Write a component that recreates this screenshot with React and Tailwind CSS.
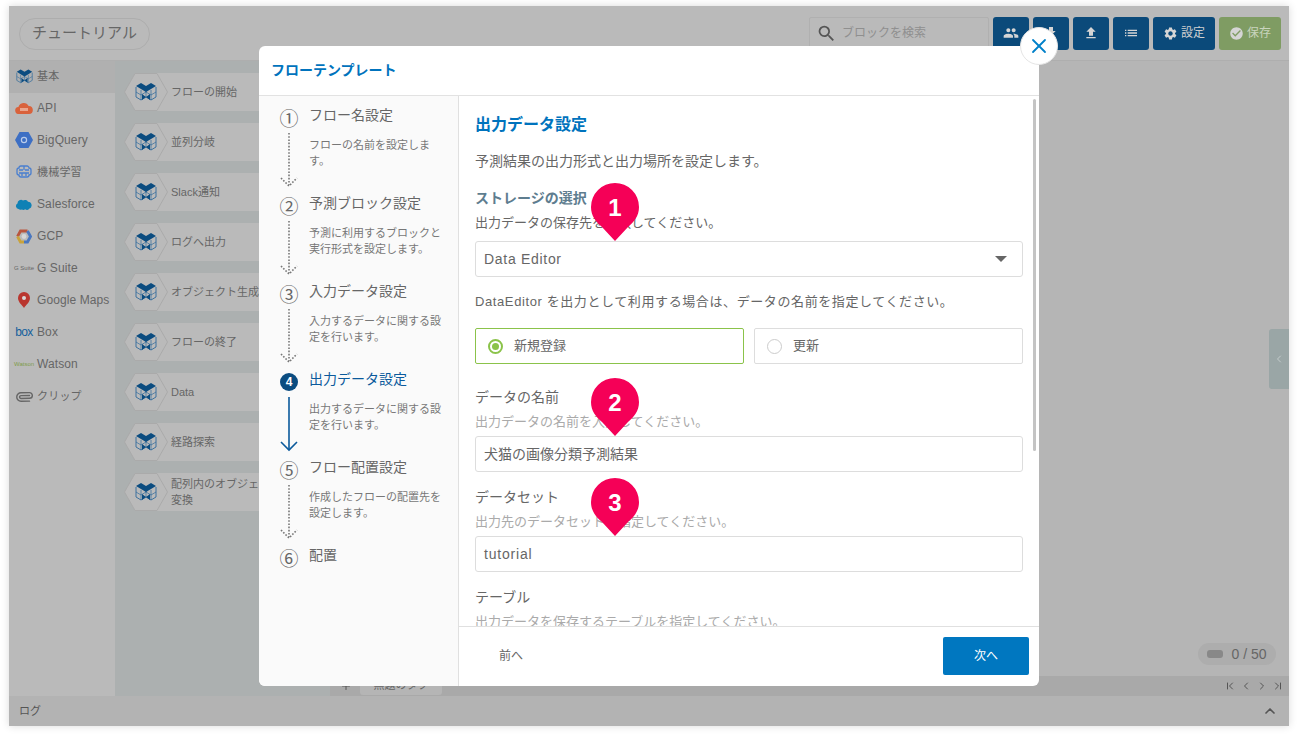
import React from 'react';
import { ChevronFirst, ChevronLast, ChevronLeft, ChevronRight, ChevronUp, Plus, X, Paperclip } from 'lucide-react';
import { MdCheckCircle, MdFileDownload, MdFileUpload, MdList, MdPeople, MdSearch, MdSettings } from 'react-icons/md';

const font = { fontFamily: '"Liberation Sans", "Noto Sans CJK JP", sans-serif' };

const BlockIcon = ({ size = 22 }) => (
  <svg width={size} height={size} viewBox="0 0 22 20">
    <path d="M1 5v10l5 3 5-3 5 3 5-3V5" fill="none" stroke="#2f6a9c" strokeWidth="0.9" />
    <path d="M11 8v7M6 8v10M16 8v10M1 10l5 3 5-3 5 3 5-3" fill="none" stroke="#2f6a9c" strokeWidth="0.7" />
    <path d="M1 4l5-3 5 3 5-3 5 3-5 3-5 3-5-3z" fill="#0b4c80" />
    <path d="M7 12l4 3-4 3zM15 12l-4 3 4 3z" fill="#0b4c80" />
  </svg>
);

const ApiIcon = () => (
  <svg width="18" height="12" viewBox="0 0 18 12">
    <path d="M4 12a3.5 3.5 0 0 1-.6-7A5.5 5.5 0 0 1 13.6 4 4 4 0 0 1 14 12z" fill="#d9623c" />
    <rect x="5" y="6" width="8" height="3" fill="#eaa58d" />
  </svg>
);
const BigQueryIcon = () => (
  <svg width="18" height="16" viewBox="0 0 18 16">
    <path d="M4.5 0h9L18 8l-4.500 8h-9L0 8z" fill="#3d6fc4" />
    <circle cx="9" cy="8" r="2.600" fill="none" stroke="#b9cbea" strokeWidth="1.200" />
  </svg>
);
const BrainIcon = () => (
  <svg width="16" height="14" viewBox="0 0 16 14" fill="none" stroke="#4a7fcf" strokeWidth="1.300">
    <path d="M8 1H5a2 2 0 0 0-2 2 2 2 0 0 0-2 2v3a2 2 0 0 0 2 2 2 2 0 0 0 2 2h6a2 2 0 0 0 2-2 2 2 0 0 0 2-2V5a2 2 0 0 0-2-2 2 2 0 0 0-2-2z" />
    <path d="M3 5h4M9 5h4M3 8h10M6 11V8M10 11V8M8 1v4" />
  </svg>
);
const CloudIcon = () => (
  <svg width="18" height="12" viewBox="0 0 18 12">
    <path d="M3.500 11a3 3 0 0 1-1-5.600A3.500 3.500 0 0 1 8 2.500a3.500 3.500 0 0 1 5 1.200 3.600 3.600 0 0 1 1.200 7 3 3 0 0 1-4 .6 3.500 3.500 0 0 1-3.400.2A3 3 0 0 1 3.500 11z" fill="#0f81b5" />
  </svg>
);
const GcpIcon = () => (
  <svg width="16" height="15" viewBox="0 0 16 15" fill="none" strokeWidth="2.800">
    <path d="M11.500 2H4.500L1.500 7.500" stroke="#b9563f" />
    <path d="M1.500 7.500L4.500 13H8" stroke="#c9a33c" />
    <path d="M8 13h3.500l3-5.500L11.500 2" stroke="#4a77bf" />
    <circle cx="8" cy="7.500" r="2.400" fill="#d6d6d6" stroke="none" />
  </svg>
);
const MapPinIcon = () => (
  <svg width="12" height="16" viewBox="0 0 12 16">
    <path d="M6 0a6 6 0 0 1 6 6c0 4-4 7-6 10C4 13 0 10 0 6a6 6 0 0 1 6-6z" fill="#b9362f" />
    <circle cx="6" cy="6" r="2" fill="#d8d8d8" />
  </svg>
);

const categories = [
  { label: '基本', icon: <BlockIcon size={17} />, active: true },
  { label: 'API', icon: <ApiIcon />, latin: true },
  { label: 'BigQuery', icon: <BigQueryIcon />, latin: true },
  { label: '機械学習', icon: <BrainIcon /> },
  { label: 'Salesforce', icon: <CloudIcon />, latin: true },
  { label: 'GCP', icon: <GcpIcon />, latin: true },
  { label: 'G Suite', icon: <span className="text-[6px] text-[#666] whitespace-nowrap">G Suite</span>, latin: true },
  { label: 'Google Maps', icon: <MapPinIcon />, latin: true },
  { label: 'Box', icon: <span className="text-[12px] leading-none text-[#14609c] tracking-[-0.6px]">box</span>, latin: true },
  { label: 'Watson', icon: <span className="text-[6px] text-[#7f9c4a]">Watson</span>, latin: true },
  { label: 'クリップ', icon: <Paperclip size={17} className="text-[#666] rotate-45" /> },
];

const blocks = ['フローの開始', '並列分岐', 'Slack通知', 'ログへ出力', 'オブジェクト生成', 'フローの終了', 'Data', '経路探索', '配列内のオブジェクトを変換'];

const steps = [
  { n: '①', title: 'フロー名設定', desc: 'フローの名前を設定します。' },
  { n: '②', title: '予測ブロック設定', desc: '予測に利用するブロックと実行形式を設定します。' },
  { n: '③', title: '入力データ設定', desc: '入力するデータに関する設定を行います。' },
  { n: '4', title: '出力データ設定', desc: '出力するデータに関する設定を行います。', active: true },
  { n: '⑤', title: 'フロー配置設定', desc: '作成したフローの配置先を設定します。' },
  { n: '⑥', title: '配置' },
];

const Pin = ({ n, className }) => (
  <div className={`absolute left-[132px] w-[48px] h-[58px] ${className}`}>
    <svg width="48" height="58" viewBox="0 0 48 58" className="absolute inset-0">
      <path d="M24 0a24 24 0 0 1 24 24c0 9-5 15-11 20L24 58 11 44C5 39 0 33 0 24A24 24 0 0 1 24 0z" fill="#f50057" />
    </svg>
    <span className="absolute inset-x-0 top-[10px] text-center text-[24px] leading-[30px] font-bold text-white">{n}</span>
  </div>
);

const Field = ({ label, hint, value, latin, className }) => (
  <div className={className}>
    <div className="text-[14px] leading-[20px] text-[#666]">{label}</div>
    <div className="mt-[5px] text-[13px] leading-[20px] text-[#aaa]">{hint}</div>
    {value && (
      <div className={`mt-[4px] h-[36px] flex items-center px-[8px] border border-[#ddd] rounded-[3px] text-[14px] text-[#666] ${latin ? 'tracking-[0.8px]' : ''}`}>
        {value}
      </div>
    )}
  </div>
);

const StepArrow = ({ active }) => (
  <svg width="18" height="56" viewBox="0 0 18 56" fill="none" className="absolute left-0 top-[28px]">
    {active ? (
      <g stroke="#0b5a9c" strokeWidth="1.600">
        <path d="M9 0v52" />
        <path d="M1 45l8 8 8-8" />
      </g>
    ) : (
      <g stroke="#777" strokeWidth="1.600" strokeDasharray="1.600 1.600">
        <path d="M9 0v52" />
        <path d="M1 45l8 8 8-8" />
      </g>
    )}
  </svg>
);

const Step = ({ n, title, desc, active }) => (
  <div className="relative h-[88px] pl-[29px]">
    {desc && <StepArrow active={active} />}
    <div className={`absolute left-0 w-[18px] h-[18px] flex items-center justify-center ${active ? 'top-[4px] rounded-full bg-[#0b4c80] text-white text-[12px] font-bold' : 'top-[5px] text-[#666] text-[19px] leading-none'}`}>
      {n}
    </div>
    <div className={`text-[14px] leading-[20px] ${active ? 'text-[#0b5a9c]' : 'text-[#666]'}`}>{title}</div>
    {desc && <div className="mt-[12px] w-[134px] text-[11px] leading-[16px] text-[#777]">{desc}</div>}
  </div>
);

const App = () => {
  return (
    <div style={font} className="w-[1298px] h-[738px] bg-white pt-[6px] pl-[9px]">
      <div className="relative w-[1280px] h-[720px] flex flex-col bg-[#b5b5b5] shadow-[0_0_8px_rgba(0,0,0,0.15)] overflow-hidden">
        {/* header */}
        <div className="h-[55px] shrink-0 flex items-center pl-[10px] pr-[8px] bg-[#bababa] border-b border-[#aeaeae]">
          <div className="mt-[1px] w-[131px] h-[32px] flex items-center justify-center rounded-full border border-[#adadad] text-[15px] text-[#666]">
            チュートリアル
          </div>
          <div className="ml-auto flex items-center gap-[4px]">
            <div className="w-[180px] h-[33px] flex items-center gap-[5px] pl-[6px] border border-[#b0b0b0] rounded-[2px] text-[12px] text-[#8f8f8f]">
              <MdSearch size={21} className="text-[#555]" />
              ブロックを検索
            </div>
            <div className="w-[36px] h-[33px] rounded-[3px] bg-[#0b4a7a] flex items-center justify-center"><MdPeople size={16} className="text-[#d5d5d5]" /></div>
            <div className="w-[36px] h-[33px] rounded-[3px] bg-[#0b4a7a] flex items-center justify-center"><MdFileDownload size={16} className="text-[#d5d5d5]" /></div>
            <div className="w-[36px] h-[33px] rounded-[3px] bg-[#0b4a7a] flex items-center justify-center"><MdFileUpload size={16} className="text-[#d5d5d5]" /></div>
            <div className="w-[36px] h-[33px] rounded-[3px] bg-[#0b4a7a] flex items-center justify-center"><MdList size={16} className="text-[#d5d5d5]" /></div>
            <div className="w-[62px] h-[33px] rounded-[3px] bg-[#0b4a7a] flex items-center justify-center gap-[3px] text-[12px] text-[#cfcfcf]"><MdSettings size={15} className="text-[#d5d5d5]" />設定</div>
            <div className="w-[62px] h-[33px] rounded-[3px] bg-[#7f9c63] flex items-center justify-center gap-[3px] text-[12px] text-[#c9d4bd]"><MdCheckCircle size={15} className="text-[#d5d5d5]" />保存</div>
          </div>
        </div>

        {/* main */}
        <div className="flex-1 flex min-h-0">
          <div className="w-[106px] shrink-0 bg-[#bababa]">
            {categories.map(({ label, icon, active, latin }) => (
              <div key={label} className={`h-[32px] pb-[2px] flex items-center ${active ? 'bg-[#b0b0b0]' : ''}`}>
                <div className="w-[28px] flex justify-center shrink-0 pl-[2px]">{icon}</div>
                <span className={`text-[#666] whitespace-nowrap ${latin ? 'text-[12px] tracking-[0.1px]' : 'text-[11px] tracking-[0.2px]'}`}>{label}</span>
              </div>
            ))}
          </div>
          <div className="w-[215px] shrink-0 bg-[#acb0b0] pt-[12px] pl-[9px] flex flex-col gap-[12px] overflow-hidden">
            {blocks.map((label) => (
              <div key={label} className="relative h-[38px] flex items-center pl-[15px] bg-[#bababa] ml-[32px]">
                <div className="absolute left-[-32px] top-0 w-[44px] h-[38px] flex items-center justify-center">
                  <svg width="44" height="38" viewBox="0 0 44 38" className="absolute inset-0">
                    <path d="M0.500 19L11 0.500H33L43.500 19L33 37.500H11z" fill="#bababa" stroke="#aaaaaa" />
                  </svg>
                  <span className="relative flex"><BlockIcon /></span>
                </div>
                <span className="w-[125px] text-[11px] leading-[16px] text-[#666]">{label}</span>
              </div>
            ))}
          </div>
          <div className="flex-1 relative flex flex-col">
            <div className="absolute right-0 top-[268px] w-[20px] h-[60px] rounded-l-[3px] bg-[#9aa6a6] flex items-center justify-center">
              <ChevronLeft size={12} className="text-[#c4cccc]" />
            </div>
            <div className="mt-auto mr-[13px] self-end w-[78px] h-[22px] mb-[11px] rounded-full bg-[#adadad] flex items-center justify-center gap-[8px] text-[14px] text-[#666]">
              <span className="w-[16px] h-[8px] rounded-[3px] bg-[#888]" />
              0 / 50
            </div>
            <div className="h-[20px] bg-[#a9a9a9] flex items-center pl-[10px] pr-[5px]">
              <Plus size={12} className="text-[#555]" />
              <div className="ml-[8px] w-[82px] h-[18px] rounded-b-[3px] bg-[#b5b5b5] text-[11px] text-[#666] text-center">無題のタブ</div>
              <div className="ml-auto flex items-center gap-[4px] text-[#555]">
                <ChevronFirst size={12} />
                <ChevronLeft size={12} />
                <ChevronRight size={12} />
                <ChevronLast size={12} />
              </div>
            </div>
          </div>
        </div>

        {/* log bar */}
        <div className="h-[30px] shrink-0 bg-[#b3b3b3] flex items-center justify-between pl-[10px] pr-[11px] text-[11px] text-[#555]">
          ログ
          <ChevronUp size={16} strokeWidth={2.500} className="text-[#555]" />
        </div>

        {/* modal */}
        <div className="absolute left-[250px] top-[40px] w-[780px] h-[640px] flex flex-col bg-white rounded-[6px]">
          <div className="h-[50px] shrink-0 flex items-center pl-[12px] border-b border-[#e2e2e2] text-[14px] font-bold text-[#0073bd]">
            フローテンプレート
          </div>
          <div className="flex-1 flex min-h-0">
            <div className="w-[200px] shrink-0 bg-[#fafafa] border-r border-[#e0e0e0] pt-[9px] pl-[21px] rounded-bl-[6px]">
              {steps.map((s) => <Step key={s.title} {...s} />)}
            </div>
            <div className="flex-1 flex flex-col min-w-0">
              <div className="relative flex-1 overflow-hidden pl-[16px] pr-[16px]">
                <div className="absolute right-[3px] top-[3px] w-[3px] h-[352px] rounded-full bg-[#c4c4c4]" />
                <Pin n="1" className="top-[87px]" />
                <Pin n="2" className="top-[282px]" />
                <Pin n="3" className="top-[382px]" />
                <h2 className="pt-[19px] text-[16px] leading-[20px] font-bold text-[#0073bd]">出力データ設定</h2>
                <p className="mt-[16px] text-[14px] leading-[20px] text-[#666]">予測結果の出力形式と出力場所を設定します。</p>
                <div className="mt-[17px] text-[14px] leading-[20px] font-bold text-[#5e7d8f]">ストレージの選択</div>
                <div className="mt-[5px] text-[13px] leading-[20px] text-[#666]">出力データの保存先を選択してください。</div>
                <div className="mt-[8px] h-[36px] flex items-center justify-between pl-[8px] pr-[15px] border border-[#ddd] rounded-[3px] text-[14px] text-[#666] tracking-[0.7px]">
                  Data Editor
                  <span className="w-0 h-0 border-x-[6px] border-x-transparent border-t-[6px] border-t-[#666]" />
                </div>
                <div className="mt-[15px] text-[13px] leading-[20px] text-[#666] tracking-[0.6px]">DataEditor を出力として利用する場合は、データの名前を指定してください。</div>
                <div className="mt-[16px] flex gap-[10px]">
                  <div className="flex-1 h-[36px] flex items-center gap-[11px] pl-[12px] border border-[#8bc34a] rounded-[2px] text-[13px] text-[#666]">
                    <span className="w-[15px] h-[15px] rounded-full border-[2px] border-[#8bc34a] flex items-center justify-center"><span className="w-[7px] h-[7px] rounded-full bg-[#8bc34a]" /></span>
                    新規登録
                  </div>
                  <div className="flex-1 h-[36px] flex items-center gap-[11px] pl-[12px] border border-[#ddd] rounded-[2px] text-[13px] text-[#666]">
                    <span className="w-[15px] h-[15px] rounded-full border border-[#ccc]" />
                    更新
                  </div>
                </div>
                <Field className="mt-[23px]" label="データの名前" hint="出力データの名前を入力してください。" value="犬猫の画像分類予測結果" />
                <Field className="mt-[15px]" label="データセット" hint="出力先のデータセットを指定してください。" value="tutorial" latin />
                <Field className="mt-[15px]" label="テーブル" hint="出力データを保存するテーブルを指定してください。" />
              </div>
              <div className="h-[60px] shrink-0 border-t border-[#e0e0e0] flex items-center justify-between pl-[40px] pr-[10px] pb-[2px]">
                <span className="text-[12px] text-[#666]">前へ</span>
                <div className="w-[86px] h-[38px] rounded-[2px] bg-[#0077c0] flex items-center justify-center text-[12px] text-white">次へ</div>
              </div>
            </div>
          </div>
          <div className="absolute right-[-19px] top-[-19px] w-[38px] h-[38px] rounded-full bg-white border border-[#e5e5e5] flex items-center justify-center">
            <X size={24} strokeWidth={1.800} className="text-[#0080c9]" />
          </div>
        </div>
      </div>
    </div>
  );
};

export default App;
